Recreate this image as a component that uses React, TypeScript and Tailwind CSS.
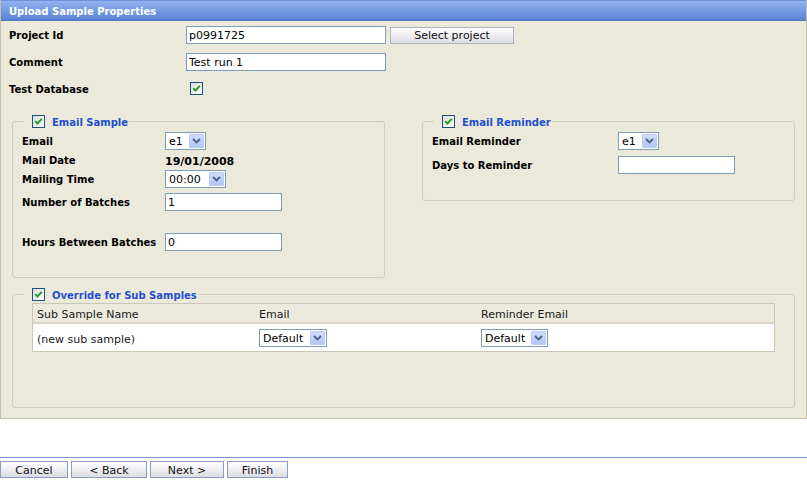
import React from "react";

function Check() {
  return (
    <span className="inline-flex h-[13px] w-[13px] shrink-0 items-center justify-center border border-[#1c5180] bg-gradient-to-br from-[#dcdcd6] to-white">
      <svg width="9" height="9" viewBox="0 0 9 9">
        <path d="M1.2 4.2 L3.4 6.5 L7.8 1.8" fill="none" stroke="#21a121" strokeWidth="1.9" />
      </svg>
    </span>
  );
}

function Select({ w, text }: { w: string; text: string }) {
  return (
    <div className={`${w} flex h-[18px] items-center border border-[#7f9db9] bg-white`}>
      <span className="flex-1 pl-[3px] pt-[1px] text-[11px] leading-none text-black">{text}</span>
      <span className="mr-[1px] flex h-[14px] w-[15px] items-center justify-center rounded-[1px] border border-[#b9cbf3] bg-gradient-to-b from-[#cfdcfd] to-[#b3c7f5]">
        <svg width="9" height="6" viewBox="0 0 9 6">
          <path d="M1 1 L4.5 4.5 L8 1" fill="none" stroke="#4d6185" strokeWidth="1.8" />
        </svg>
      </span>
    </div>
  );
}

function Input({ w, value }: { w: string; value: string }) {
  return (
    <input
      readOnly
      value={value}
      className={`${w} h-[18px] border border-[#7f9db9] bg-white px-[2px] text-[11px] text-black outline-none`}
    />
  );
}

function Btn({ w, label, border = "border-[#8a9dba]" }: { w: string; label: string; border?: string }) {
  return (
    <div
      className={`${w} flex h-[17px] items-center justify-center border ${border} bg-gradient-to-b from-white to-[#dcdce4] pt-[1px] text-[11px] leading-none text-[#111]`}
    >
      {label}
    </div>
  );
}

function Legend({ title }: { title: string }) {
  return (
    <legend className="ml-[2px] pl-[8px] pr-[1px]">
      <span className="flex h-[14px] items-center gap-[7px]">
        <Check />
        <span className="pt-[3px] text-[10px] font-bold leading-none text-[#1f4fd2]">{title}</span>
      </span>
    </legend>
  );
}

function Label({ w, text }: { w: string; text: string }) {
  return <span className={`${w} shrink-0 pt-[2px] text-[10px] font-bold leading-none text-black`}>{text}</span>;
}

export default function App() {
  return (
    <div className="h-[480px] w-[807px] overflow-hidden bg-white font-['DejaVu_Sans',sans-serif] text-[11px] text-black">
      <div className="flex h-[419px] flex-col border-b border-l border-r border-[#c4c1b1] bg-[#ebe9d9]">
        <div className="flex h-[21px] items-center border-b border-t border-b-[#4e75c8] border-t-[#6e92da] bg-gradient-to-b from-[#90b3f0] to-[#5a82d4] pl-[8px] pt-[3px] text-[10px] font-bold leading-none text-white">
          Upload Sample Properties
        </div>

        <div className="flex flex-col gap-[9px] pl-[8px] pt-[5px]">
          <div className="flex h-[18px] items-center">
            <Label w="w-[177px]" text="Project Id" />
            <Input w="w-[200px]" value="p0991725" />
            <div className="ml-[4px]">
              <Btn w="w-[124px]" label="Select project" border="border-[#aab2c2]" />
            </div>
          </div>
          <div className="flex h-[18px] items-center">
            <Label w="w-[177px]" text="Comment" />
            <Input w="w-[200px]" value="Test run 1" />
          </div>
          <div className="flex h-[18px] items-center">
            <Label w="w-[177px]" text="Test Database" />
            <span className="ml-[4px] mt-[2px]">
              <Check />
            </span>
          </div>
        </div>

        <div className="mt-[16px] flex items-start gap-[37px] pl-[11px]">
          <fieldset className="h-[164px] w-[373px] rounded-[3px] border border-[#d0cebf] pl-[9px] pt-[4px]">
            <Legend title="Email Sample" />
            <div className="flex flex-col">
              <div className="flex h-[18px] items-center">
                <Label w="w-[143px]" text="Email" />
                <Select w="w-[41px]" text="e1" />
              </div>
              <div className="flex h-[20px] items-center">
                <Label w="w-[143px]" text="Mail Date" />
                <span className="pt-[2px] text-[11px] font-bold leading-none">19/01/2008</span>
              </div>
              <div className="flex h-[18px] items-center">
                <Label w="w-[143px]" text="Mailing Time" />
                <Select w="w-[61px]" text="00:00" />
              </div>
              <div className="mt-[5px] flex h-[18px] items-center">
                <Label w="w-[143px]" text="Number of Batches" />
                <Input w="w-[117px]" value="1" />
              </div>
              <div className="mt-[22px] flex h-[18px] items-center">
                <Label w="w-[143px]" text="Hours Between Batches" />
                <Input w="w-[117px]" value="0" />
              </div>
            </div>
          </fieldset>

          <fieldset className="h-[87px] w-[373px] rounded-[3px] border border-[#d0cebf] pl-[9px] pt-[4px]">
            <Legend title="Email Reminder" />
            <div className="flex flex-col">
              <div className="flex h-[18px] items-center">
                <Label w="w-[186px]" text="Email Reminder" />
                <Select w="w-[41px]" text="e1" />
              </div>
              <div className="mt-[6px] flex h-[18px] items-center">
                <Label w="w-[186px]" text="Days to Reminder" />
                <Input w="w-[117px]" value="" />
              </div>
            </div>
          </fieldset>
        </div>

        <fieldset className="ml-[11px] mt-[9px] h-[121px] w-[783px] rounded-[3px] border border-[#d0cebf] pl-[9px] pt-[2px]">
          <Legend title="Override for Sub Samples" />
          <div className="ml-[10px] w-[743px] border border-[#cac7b7] text-[11px] text-[#1a1a1a]">
            <div className="flex h-[20px] items-center border-b-2 border-[#d9d5c6] bg-[#ebeadc] pt-[2px] leading-none">
              <span className="w-[222px] pl-[4px]">Sub Sample Name</span>
              <span className="w-[222px] pl-[4px]">Email</span>
              <span className="flex-1 pl-[4px]">Reminder Email</span>
            </div>
            <div className="flex h-[27px] items-center bg-white pt-[1px] leading-none">
              <span className="w-[222px] pl-[4px] pt-[2px]">(new sub sample)</span>
              <span className="w-[222px] pl-[4px]">
                <Select w="w-[68px]" text="Default" />
              </span>
              <span className="flex-1 pl-[4px]">
                <Select w="w-[67px]" text="Default" />
              </span>
            </div>
          </div>
        </fieldset>
      </div>

      <div className="mt-[38px] flex gap-[3px] border-t border-[#7495c9] pt-[3px]">
        <Btn w="w-[68px]" label="Cancel" />
        <Btn w="w-[76px]" label="< Back" />
        <Btn w="w-[74px]" label="Next >" />
        <Btn w="w-[61px]" label="Finish" />
      </div>
    </div>
  );
}
